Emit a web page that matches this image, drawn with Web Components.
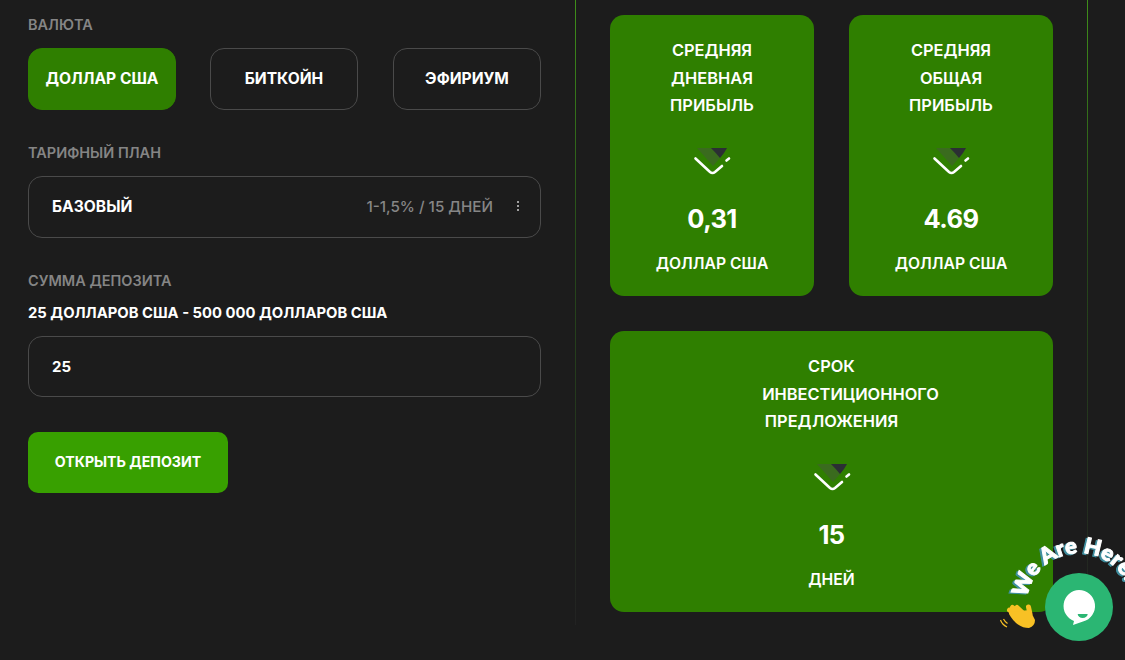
<!DOCTYPE html>
<html lang="ru">
<head>
<meta charset="utf-8">
<title>Депозит</title>
<style>
    html, body { margin: 0; height: 100%; background: #1c1c1c; overflow: hidden; }
    body { font-family: "Inter", "Liberation Sans", sans-serif; color: #fff; }
</style>
</head>
<body>

<deposit-page>
    <deposit-form slot="form"></deposit-form>
    <stat-card slot="daily" value="0,31" unit="ДОЛЛАР США">
        <span>СРЕДНЯЯ</span><span>ДНЕВНАЯ</span><span>ПРИБЫЛЬ</span>
    </stat-card>
    <stat-card slot="total" value="4.69" unit="ДОЛЛАР США">
        <span>СРЕДНЯЯ</span><span>ОБЩАЯ</span><span>ПРИБЫЛЬ</span>
    </stat-card>
    <stat-card slot="term" value="15" unit="ДНЕЙ">
        <span>СРОК</span><span style="margin-left:38px">ИНВЕСТИЦИОННОГО</span><span>ПРЕДЛОЖЕНИЯ</span>
    </stat-card>
</deposit-page>
<chat-widget></chat-widget>

<script>
    // small helper, every element just sets its shadow html once
    class BaseElement extends HTMLElement {
        constructor() {
            super();
            this.attachShadow({ mode: 'open' });
        }
    }

    class DepositPage extends BaseElement {
        connectedCallback() {
            this.shadowRoot.innerHTML = `
                <style>
                    :host { display: flex; height: 625px; }
                    .left { width: 513px; padding: 0 34px 0 28px; flex: none; }
                    .right {
                        flex: none;
                        width: 443px;
                        padding: 15px 34px 0 34px;
                        border-style: solid;
                        border-width: 0 1px;
                        border-image: linear-gradient(#3f8f1a 0, #26481a 40%, #222 100%) 1;
                        display: grid;
                        grid-template-columns: 204px 204px;
                        grid-template-rows: 281px 281px;
                        gap: 35px;
                    }
                    .wide { grid-column: 1 / 3; }
                </style>
                <div class="left"><slot name="form"></slot></div>
                <div class="right">
                    <slot name="daily"></slot>
                    <slot name="total"></slot>
                    <div class="wide"><slot name="term"></slot></div>
                </div>
            `;
        }
    }

    class DepositForm extends BaseElement {
        connectedCallback() {
            this.shadowRoot.innerHTML = `
                <style>
                    :host { display: flex; flex-direction: column; padding-top: 16px; }
                    .currencies { display: flex; gap: 34px; margin-top: 14px; }
                    .currencies :last-child { margin-left: 1px; }
                    .plan { margin-top: 34px; }
                    .field {
                        box-sizing: border-box;
                        height: 62px;
                        margin-top: 14px;
                        border: 1px solid #4a4a4a;
                        border-radius: 14px;
                        padding: 0 21px 0 23px;
                        display: flex;
                        align-items: center;
                        font-size: 15.6px;
                        font-weight: 700;
                    }
                    .field .name { flex: 1; padding-bottom: 2px; }
                    .field .terms { color: #868686; font-weight: 500; font-size: 15.2px; padding-bottom: 2px; }
                    .dots { margin-left: 24px; display: flex; flex-direction: column; gap: 2px; padding-bottom: 2px; }
                    .dots i { width: 2px; height: 2px; background: #ccc; border-radius: 50%; display: block; }
                    .range { margin-top: 14px; font-size: 14.8px; font-weight: 700; line-height: 18px; }
                    .amount { font-size: 15px; height: 61px; }
                    .submit {
                        align-self: flex-start;
                        margin-top: 35px;
                        width: 200px;
                        height: 61px;
                        padding-bottom: 2px;
                        box-sizing: border-box;
                        border-radius: 10px;
                        background: #38a000;
                        color: #fff;
                        font-size: 14.2px;
                        font-weight: 700;
                        display: flex;
                        align-items: center;
                        justify-content: center;
                    }
                </style>
                <form-label>ВАЛЮТА</form-label>
                <div class="currencies">
                    <currency-button active>ДОЛЛАР США</currency-button>
                    <currency-button>БИТКОЙН</currency-button>
                    <currency-button>ЭФИРИУМ</currency-button>
                </div>
                <form-label class="plan">ТАРИФНЫЙ ПЛАН</form-label>
                <div class="field">
                    <span class="name">БАЗОВЫЙ</span>
                    <span class="terms">1-1,5% / 15 ДНЕЙ</span>
                    <span class="dots"><i></i><i></i><i></i></span>
                </div>
                <form-label class="plan">СУММА ДЕПОЗИТА</form-label>
                <div class="range">25 ДОЛЛАРОВ США - 500 000 ДОЛЛАРОВ США</div>
                <div class="field amount">25</div>
                <div class="submit">ОТКРЫТЬ ДЕПОЗИТ</div>
            `;
        }
    }

    class FormLabel extends BaseElement {
        connectedCallback() {
            this.shadowRoot.innerHTML = `
                <style>
                    :host { display: block; color: #858585; font-size: 14.5px; font-weight: 600; line-height: 18px; }
                </style>
                <slot></slot>
            `;
        }
    }

    class CurrencyButton extends BaseElement {
        connectedCallback() {
            this.shadowRoot.innerHTML = `
                <style>
                    :host {
                        box-sizing: border-box;
                        display: flex;
                        align-items: center;
                        justify-content: center;
                        width: 148px;
                        height: 62px;
                        padding-bottom: 2px;
                        border: 1px solid #4a4a4a;
                        border-radius: 14px;
                        font-size: 15.6px;
                        font-weight: 700;
                        color: #fff;
                    }
                    :host([active]) { background: #2f7f00; border-color: #2f7f00; }
                </style>
                <slot></slot>
            `;
        }
    }

    class StatCard extends BaseElement {
        connectedCallback() {
            this.shadowRoot.innerHTML = `
                <style>
                    :host {
                        box-sizing: border-box;
                        display: flex;
                        flex-direction: column;
                        align-items: center;
                        height: 281px;
                        padding-top: 22px;
                        background: #2f7f00;
                        border-radius: 14px;
                        color: #fff;
                        text-align: center;
                    }
                    .title { display: flex; flex-direction: column; align-items: center; font-size: 16.4px; font-weight: 600; line-height: 27.5px; }
                    svg { margin-top: 28px; display: block; }
                    .value { margin-top: 27px; font-size: 25.5px; letter-spacing: -0.6px; font-weight: 700; line-height: 32px; }
                    .unit { margin-top: 19px; font-size: 15.7px; font-weight: 600; line-height: 20px; }
                </style>
                <div class="title"><slot></slot></div>
                <svg width="38" height="28" viewBox="0 0 38 28">
                    <path d="M4 0H34L27 10L20 18Z" fill="#3a6b1e"/>
                    <path d="M18 0H34L31 5L27 10Q23 5 18 0Z" fill="#2b2f33"/>
                    <path d="M2.5 10.5L17 24Q19.5 26 22 24L29 18" fill="none" stroke="#fff" stroke-width="2.6" stroke-linecap="round"/>
                    <path d="M33.5 12.5L36 10.5" fill="none" stroke="#fff" stroke-width="2.6" stroke-linecap="round"/>
                </svg>
                <div class="value">${this.getAttribute('value')}</div>
                <div class="unit">${this.getAttribute('unit')}</div>
            `;
        }
    }

    class ChatWidget extends BaseElement {
        connectedCallback() {
            this.shadowRoot.innerHTML = `
                <style>
                    :host { position: fixed; left: 985px; top: 530px; width: 140px; height: 130px; }
                    svg { display: block; }
                    text {
                        font-family: "Lato", sans-serif;
                        font-weight: 900;
                        font-size: 22px;
                        fill: #fff;
                        stroke: #fff;
                        stroke-width: 1px;
                        paint-order: stroke;
                        filter: drop-shadow(-1.5px 1.5px 0 #3f8fa0);
                    }
                </style>
                <svg width="140" height="130" viewBox="0 0 140 130">
                    <circle cx="94" cy="77" r="34" fill="#2bb673"/>
                    <path d="M94 60a16 16 0 0 1 4 31.5L88 95l1-4A16 16 0 0 1 94 60Z" fill="#fff"/>
                    <path d="M92.700 84h10a5 4 0 0 1-10 0Z" fill="#2bb673"/>
                    <path id="arc" d="M42 68A52.800 52.800 0 0 1 147 77" fill="none"/>
                    <text><textPath href="#arc">We Are Here!</textPath></text>
                    <g fill="none" stroke="#f8c125" stroke-width="5" stroke-linecap="round">
                        <path d="M38 88L24.500 80"/>
                        <path d="M39 86L27.500 77.500"/>
                        <path d="M40 85L32 77.500"/>
                        <path d="M45 84L43.500 77"/>
                    </g>
                    <path d="M24 82L45 80L50 90Q50 96 44 98Q32 98 24 84Z" fill="#f8c125"/>
                    <path d="M15.500 90c1 3 3.500 5.500 6.500 7M18.500 89c1 2 2 3 4 4.500" fill="none" stroke="#f8c125" stroke-width="1.200"/>
                </svg>
            `;
        }
    }

    customElements.define('deposit-page', DepositPage);
    customElements.define('deposit-form', DepositForm);
    customElements.define('form-label', FormLabel);
    customElements.define('currency-button', CurrencyButton);
    customElements.define('stat-card', StatCard);
    customElements.define('chat-widget', ChatWidget);
</script>
</body>
</html>
